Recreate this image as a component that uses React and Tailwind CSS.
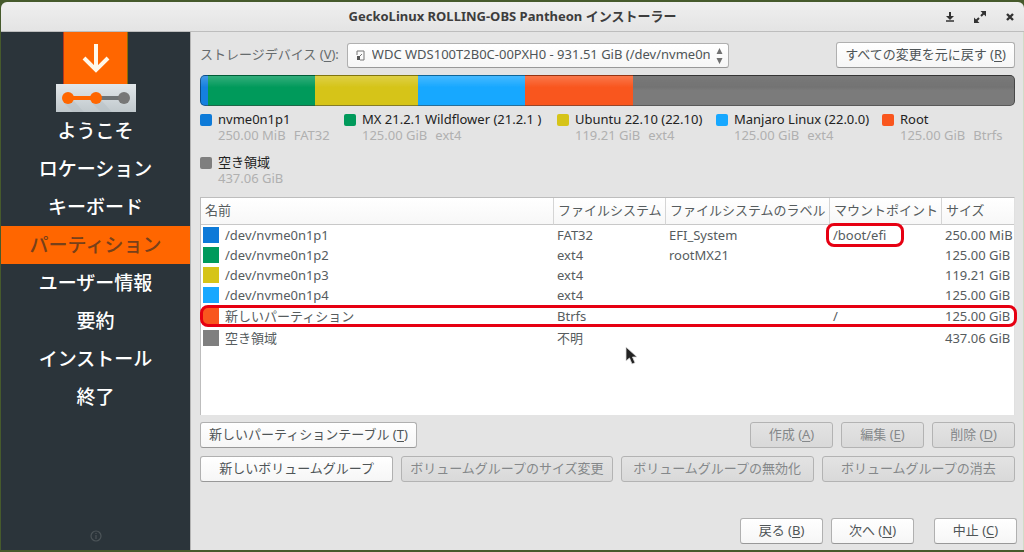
const segments = [
  { name: 'nvme0n1p1', size: '250.00 MiB', fs: 'FAT32', share: 8, bar: 'bg-[#1580e0]', box: 'bg-[#0d7ad8]' },
  { name: 'MX 21.2.1 Wildflower (21.2.1 )', size: '125.00 GiB', fs: 'ext4', share: 107, bar: 'bg-[#009a5b]', box: 'bg-[#009a5b]' },
  { name: 'Ubuntu 22.10 (22.10)', size: '119.21 GiB', fs: 'ext4', share: 103, bar: 'bg-[#d6c418]', box: 'bg-[#d6c418]' },
  { name: 'Manjaro Linux (22.0.0)', size: '125.00 GiB', fs: 'ext4', share: 107, bar: 'bg-[#17a8ff]', box: 'bg-[#17a8ff]' },
  { name: 'Root', size: '125.00 GiB', fs: 'Btrfs', share: 108, bar: 'bg-[#f9561e]', box: 'bg-[#f9561e]' },
  { name: '空き領域', size: '437.06 GiB', fs: '', share: 382, bar: 'bg-linear-to-b from-[#585858] to-[#7b7b7b] to-50%', box: 'bg-[#7f7f7f]' },
];

const rows = [
  { name: '/dev/nvme0n1p1', fs: 'FAT32', label: 'EFI_System', mount: '/boot/efi', size: '250.00 MiB', box: 'bg-[#0d7ad8]', marked: 'mount' },
  { name: '/dev/nvme0n1p2', fs: 'ext4', label: 'rootMX21', mount: '', size: '125.00 GiB', box: 'bg-[#009a5b]' },
  { name: '/dev/nvme0n1p3', fs: 'ext4', label: '', mount: '', size: '119.21 GiB', box: 'bg-[#d6c418]' },
  { name: '/dev/nvme0n1p4', fs: 'ext4', label: '', mount: '', size: '125.00 GiB', box: 'bg-[#17a8ff]' },
  { name: '新しいパーティション', fs: 'Btrfs', label: '', mount: '/', size: '125.00 GiB', box: 'bg-[#f9561e]', marked: 'row', tall: true },
  { name: '空き領域', fs: '不明', label: '', mount: '', size: '437.06 GiB', box: 'bg-[#7f7f7f]', tall: true },
];

const steps = ['ようこそ', 'ロケーション', 'キーボード', 'パーティション', 'ユーザー情報', '要約', 'インストール', '終了'];

function Button({ children, mnemonic, disabled, className = '' }) {
  const look = disabled
    ? 'border-[#b3b3b3] bg-linear-to-b from-[#e3e3e3] to-[#d9d9d9] text-[#85888a]'
    : 'border-[#b0b0b0] border-b-[#989898] bg-linear-to-b from-white to-[#f6f6f6] text-[#4f5557]';
  return (
    <button type="button" disabled={disabled} className={`h-[26px] rounded-[3px] border whitespace-nowrap ${look} ${className}`}>
      {children}
      {mnemonic && <> (<u className="underline-offset-2">{mnemonic}</u>)</>}
    </button>
  );
}

function Logo() {
  return (
    <svg className="mx-auto block" width="80" height="80" viewBox="0 0 80 80" aria-hidden="true">
      <defs>
        <linearGradient id="plate" x1="0" y1="0" x2="0" y2="1">
          <stop offset="0" stopColor="#e2e7ea" />
          <stop offset="1" stopColor="#c0c8cc" />
        </linearGradient>
      </defs>
      <rect x="7" y="0" width="65" height="52" fill="#ff6600" />
      <path d="M7.500 0v52" stroke="#b3361c" />
      <path d="M71.500 0v52" stroke="#8d6a00" />
      <path d="M40 12v26M28 26l12 12l12-12" fill="none" stroke="#fff8ea" strokeWidth="4" />
      <rect x="0" y="52" width="80" height="28" fill="url(#plate)" />
      <path d="M8 71l9 9h11l-10-11zM36 71l9 9h11l-10-11z" fill="#b2bbc0" opacity=".4" />
      <path d="M40 66h28" stroke="#6f7375" strokeWidth="4" />
      <circle cx="68" cy="66" r="6" fill="#777" />
      <path d="M12 66h28" stroke="#ff6600" strokeWidth="4" />
      <circle cx="12" cy="66" r="6" fill="#ff6600" />
      <circle cx="40" cy="66" r="6" fill="#ff6600" />
    </svg>
  );
}

function TitleBar() {
  return (
    <header className="relative flex h-[30px] items-center justify-center rounded-t-md border-b border-[#bdbdbd] bg-linear-to-b from-[#efefef] to-[#e4e4e4]">
      <h1 className="text-[13px] font-bold text-[#3d3d3d]">GeckoLinux ROLLING-OBS Pantheon インストーラー</h1>
      <div className="absolute right-2 flex items-center gap-[17px] text-[#333]">
        <button type="button" aria-label="最小化" className="p-px">
          <svg width="10" height="12" viewBox="0 0 10 12"><path d="M5 1v6" stroke="currentColor" strokeWidth="2" /><path d="M1 5h8L5 9z" fill="currentColor" /><path d="M1 10h8" stroke="currentColor" strokeWidth="1.500" /></svg>
        </button>
        <button type="button" aria-label="最大化" className="p-px">
          <svg width="12" height="12" viewBox="0 0 12 12"><path d="M6.500 0H12v5.500zM0 6.500V12h5.500z" fill="currentColor" /><path d="M7 5l3-3M5 7l-3 3" stroke="currentColor" strokeWidth="2" /></svg>
        </button>
        <button type="button" aria-label="閉じる" className="p-px">
          <svg width="10" height="10" viewBox="0 0 10 10"><path d="M2 2l6 6M8 2l-6 6" stroke="currentColor" strokeWidth="2.400" /></svg>
        </button>
      </div>
    </header>
  );
}

function Sidebar() {
  return (
    <aside className="flex w-[189px] shrink-0 flex-col bg-[#2b343a]">
      <Logo />
      <ol className="text-center text-[19px] font-medium text-white">
        {steps.map((s, i) => (
          <li key={s} className={`h-[38px] leading-[38px] ${i === 3 ? 'bg-[#ff6600] text-[#77401a]' : ''}`} aria-current={i === 3 ? 'step' : undefined}>{s}</li>
        ))}
      </ol>
      <button type="button" aria-label="情報" className="mx-auto mt-auto mb-2 text-[#4c5458]">
        <svg width="12" height="12" viewBox="0 0 12 12"><circle cx="6" cy="6" r="5" fill="none" stroke="currentColor" strokeWidth="1.200" /><path d="M6 5v4M6 3v1" stroke="currentColor" strokeWidth="1.200" /></svg>
      </button>
    </aside>
  );
}

function LegendItem({ item }) {
  return (
    <li className="flex gap-[6px]">
      <span className={`size-3 shrink-0 rounded-[2px] ${item.box}`} />
      <div className="-mt-[3px] whitespace-nowrap leading-4">
        <div className="text-[#222]">{item.name}</div>
        <div className="flex gap-2 text-[#b0b0b0]"><span>{item.size}</span><span>{item.fs}</span></div>
      </div>
    </li>
  );
}

function PartitionTable() {
  const head = 'border-r border-[#d5d5d5] pl-1 text-left font-normal last:border-r-0 whitespace-nowrap';
  return (
    <div className="relative flex-1 border border-[#bdbdbd] border-r-[#e0e0e0] border-b-0 bg-white">
      <table className="w-full table-fixed border-separate border-spacing-0 text-[#565c5e]">
        <colgroup>
          <col />
          <col className="w-28" />
          <col className="w-[164px]" />
          <col className="w-28" />
          <col className="w-[72px]" />
        </colgroup>
        <thead>
          <tr className="h-[27px] bg-linear-to-b from-white to-[#f7f7f7] *:border-b *:border-b-[#c8c8c8]">
            <th className={head}>名前</th>
            <th className={head}>ファイルシステム</th>
            <th className={head}>ファイルシステムのラベル</th>
            <th className={head}>マウントポイント</th>
            <th className={head}>サイズ</th>
          </tr>
        </thead>
        <tbody>
          {rows.map((r) => (
            <tr key={r.name} className={`relative leading-5 ${r.tall ? 'h-[22px]' : 'h-5'}`}>
              <td className="p-0 pl-[2px]">
                <div className="flex items-center gap-[6px]">
                  <span className={`size-4 ${r.box}`} />
                  {r.name}
                </div>
                {r.marked === 'row' && <span className="absolute -right-[3px] -left-px inset-y-0 rounded-lg border-3 border-[#e60012]" />}
              </td>
              <td className="p-0 pl-[3px]">{r.fs}</td>
              <td className="p-0 pl-[3px]">{r.label}</td>
              <td className="relative p-0 pl-[3px]">
                {r.mount}
                {r.marked === 'mount' && <span className="absolute -inset-y-[2px] -left-1 w-[78px] rounded-lg border-3 border-[#e60012]" />}
              </td>
              <td className="p-0 pl-[3px] whitespace-nowrap">{r.size}</td>
            </tr>
          ))}
        </tbody>
      </table>
      <svg className="absolute top-[148px] left-[424px]" width="14" height="20" viewBox="0 0 14 20" aria-hidden="true">
        <path d="M1 1v14l3.500-3l2.500 6l3-1.200l-2.500-5.800h4.500z" fill="#222" stroke="#ddd" strokeWidth=".8" />
      </svg>
    </div>
  );
}

export default function App() {
  return (
    <div className="flex min-h-screen flex-col bg-[#465a2c] pt-[2px] pb-[2px] pl-px font-['Noto_Sans','Noto_Sans_CJK_JP',sans-serif] text-[13px]" lang="ja">
      <TitleBar />
      <div className="flex flex-1">
        <Sidebar />
        <main className="flex min-w-0 flex-1 flex-col border-r border-l border-r-[#d2dcc8] border-l-[#b4b4b4] bg-[#e4e4e4] pt-[10px] pb-[6px] pl-[9px]">
          <div className="flex flex-1 flex-col pr-2">
            <div className="flex items-center">
              <label htmlFor="device" className="mr-2 whitespace-nowrap text-[#666b6d]">ストレージデバイス (<u className="underline-offset-2">V</u>):</label>
              <div className="relative w-[382px]">
                <select id="device" className="block h-[25px] w-full appearance-none overflow-hidden rounded-[3px] border border-[#b0b0b0] border-b-[#989898] bg-linear-to-b from-white to-[#f6f6f6] pr-[18px] pl-6 text-[#4f5557]">
                  <option>WDC WDS100T2B0C-00PXH0 - 931.51 GiB (/dev/nvme0n1)</option>
                </select>
                <svg className="pointer-events-none absolute top-[7px] left-[9px]" width="10" height="11" viewBox="0 0 10 11"><path d="M1 5V1h7v9H4" fill="none" stroke="#777" /><path d="M1 6h3v4H1z" fill="#555" /><path d="M4 6l2-2" stroke="#777" /></svg>
                <svg className="pointer-events-none absolute top-[5px] right-[6px]" width="7" height="16" viewBox="0 0 7 16"><path d="M3.500 0L6.500 6h-6zM.5 10h6l-3 6z" fill="#707070" /></svg>
              </div>
              <Button mnemonic="R" className="ml-auto px-2">すべての変更を元に戻す</Button>
            </div>

            <div className="relative mt-[7px] flex h-[31px] overflow-hidden rounded-[5px]">
              {segments.map((s) => (
                <div key={s.name} className={s.bar} style={{ flexGrow: s.share, flexBasis: 0 }} />
              ))}
              <div className="absolute inset-0 rounded-[5px] border border-black/40 bg-linear-to-b from-white/20 to-transparent to-40%" />
            </div>

            <ul className="mt-2 grid grid-cols-[144fr_213fr_159fr_166fr_133fr] gap-y-[14px]">
              {segments.map((s) => <LegendItem key={s.name} item={s} />)}
            </ul>

            <div className="mt-[11px] flex flex-1 flex-col"><PartitionTable /></div>

            <div className="mt-[7px] flex gap-2">
              <Button mnemonic="T" className="mr-auto px-2">新しいパーティションテーブル</Button>
              <Button disabled mnemonic="A" className="w-[83px]">作成</Button>
              <Button disabled mnemonic="E" className="w-[83px]">編集</Button>
              <Button disabled mnemonic="D" className="w-[83px]">削除</Button>
            </div>
            <div className="mt-2 grid grid-cols-[193fr_211fr_193fr_193fr] gap-2">
              <Button>新しいボリュームグループ</Button>
              <Button disabled>ボリュームグループのサイズ変更</Button>
              <Button disabled>ボリュームグループの無効化</Button>
              <Button disabled>ボリュームグループの消去</Button>
            </div>
          </div>
          <footer className="mt-9 flex justify-end gap-2 pr-[6px]">
            <Button mnemonic="B" className="w-[83px]">戻る</Button>
            <Button mnemonic="N" className="w-[83px]">次へ</Button>
            <Button mnemonic="C" className="ml-3 w-[83px]">中止</Button>
          </footer>
        </main>
      </div>
    </div>
  );
}
